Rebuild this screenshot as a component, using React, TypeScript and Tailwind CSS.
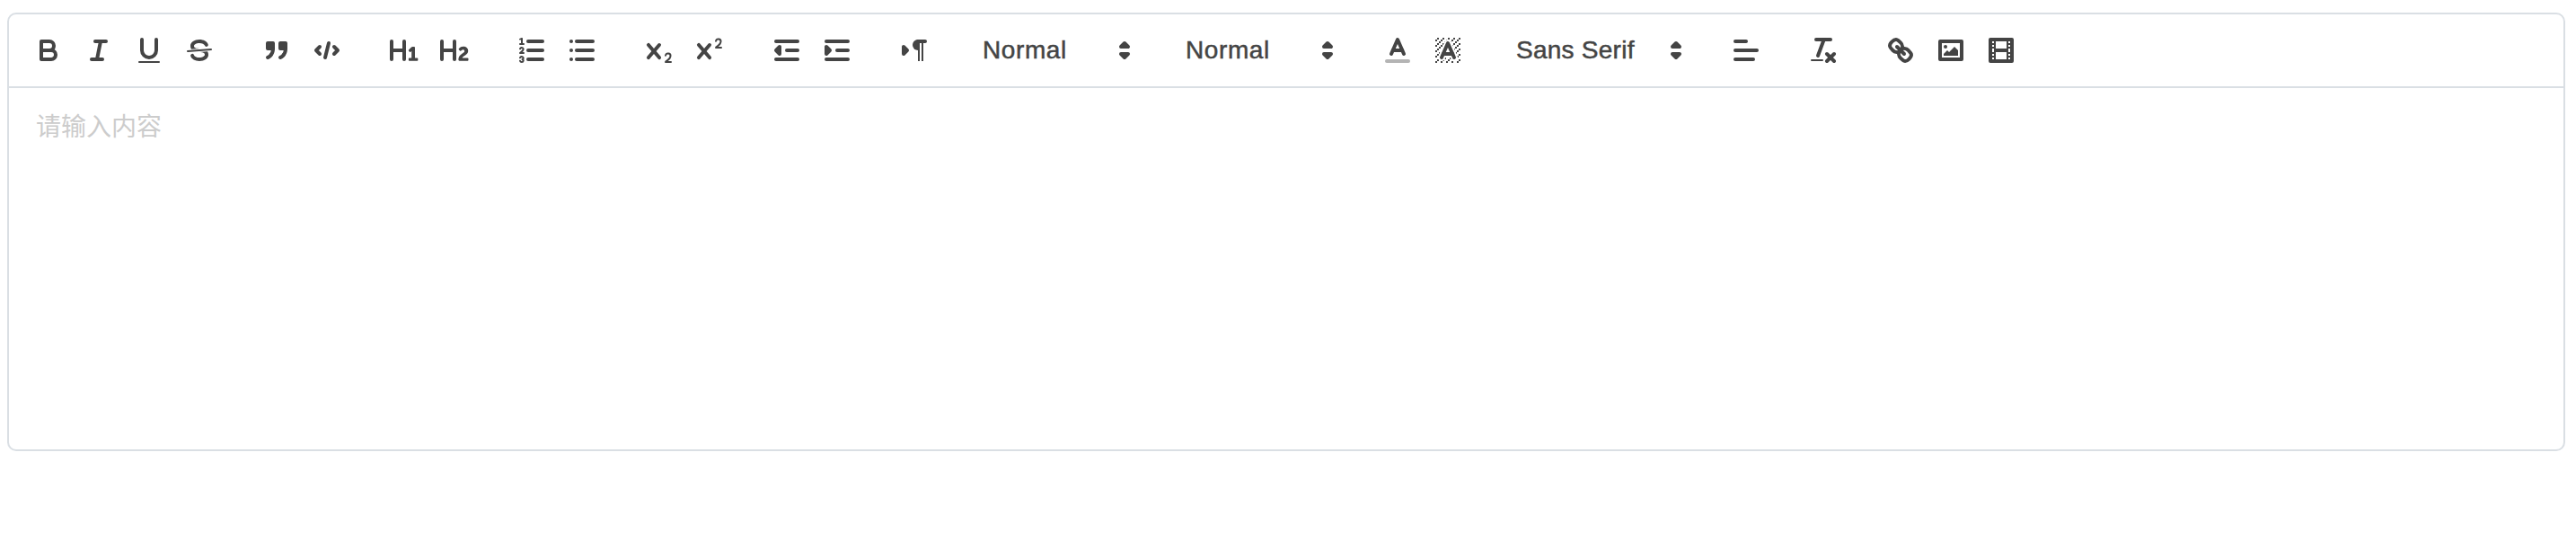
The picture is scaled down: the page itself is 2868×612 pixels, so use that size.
import type { ReactNode } from "react";

function Icon({ children }: { children: ReactNode }) {
  return (
    <svg
      viewBox="0 0 18 18"
      className="block size-9 shrink-0"
      fill="none"
      stroke="#444"
      strokeWidth={2}
      strokeLinecap="round"
      strokeLinejoin="round"
    >
      {children}
    </svg>
  );
}

function Fill({ children }: { children: ReactNode }) {
  return (
    <g fill="#444" stroke="none">
      {children}
    </g>
  );
}

function Tool({ label, children }: { label: string; children: ReactNode }) {
  return (
    <button type="button" aria-label={label} className="flex h-12 w-14 items-center justify-center">
      <Icon>{children}</Icon>
    </button>
  );
}

function Group({ children }: { children: ReactNode }) {
  return <div className="flex shrink-0">{children}</div>;
}

function Picker({ label, size }: { label: string; size: string }) {
  return (
    <button
      type="button"
      className={`flex h-12 items-center justify-between border-2 border-transparent pl-4 text-[28px] leading-[44px] text-[#444] [-webkit-text-stroke:0.5px_#444] ${size}`}
    >
      <span className="whitespace-nowrap">{label}</span>
      <Icon>
        <polygon fill="#444" points="7 11 9 13 11 11 7 11" />
        <polygon fill="#444" points="7 7 9 5 11 7 7 7" />
      </Icon>
    </button>
  );
}

const CROSS =
  "M9.65,5.241a1,1,0,0,0-1.409.108L6,7.964,3.759,5.349A1,1,0,0,0,2.192,6.59178Q2.21541,6.6213,2.241,6.649L4.684,9.5,2.241,12.35A1,1,0,0,0,3.71,13.70722q0.02557-.02768.049-0.05722L6,11.036,8.241,13.65a1,1,0,1,0,1.567-1.24277Q9.78459,12.3777,9.759,12.35L7.316,9.5,9.759,6.651A1,1,0,0,0,9.65,5.241Z";

// Unit squares of the hatch behind the background-colour icon
const HATCH: [number, number][] = [
  [4, 4], [2, 6], [3, 5], [4, 7], [2, 12], [2, 9], [2, 15], [3, 8], [12, 2], [11, 3],
  [2, 3], [6, 2], [3, 2], [5, 3], [9, 2], [15, 14], [13, 7], [15, 5], [14, 6], [15, 8],
  [14, 9], [14, 3], [15, 2], [12, 5], [13, 4], [9, 14], [8, 15], [5, 15], [11, 15],
  [14, 15], [15, 11],
];

function Toolbar() {
  return (
    <div className="flex h-20 items-center gap-[30px] px-4">
      <Group>
        <Tool label="Bold">
          <path d="M5,4H9.5A2.5,2.5,0,0,1,12,6.5v0A2.5,2.5,0,0,1,9.5,9H5A0,0,0,0,1,5,9V4A0,0,0,0,1,5,4Z" />
          <path d="M5,9h5.5A2.5,2.5,0,0,1,13,11.5v0A2.5,2.5,0,0,1,10.5,14H5a0,0,0,0,1,0,0V9A0,0,0,0,1,5,9Z" />
        </Tool>
        <Tool label="Italic">
          <line x1="7" x2="13" y1="4" y2="4" />
          <line x1="5" x2="11" y1="14" y2="14" />
          <line x1="8" x2="10" y1="14" y2="4" />
        </Tool>
        <Tool label="Underline">
          <path d="M5,3V9a4.012,4.012,0,0,0,4,4H9a4.012,4.012,0,0,0,4-4V3" />
          <Fill>
            <rect height="1" rx="0.5" width="12" x="3" y="15" />
          </Fill>
        </Tool>
        <Tool label="Strike">
          <line strokeWidth="1" x1="15.5" x2="2.5" y1="8.5" y2="9.5" />
          <Fill>
            <path d="M9.007,8C6.542,7.791,6,7.519,6,6.5,6,5.792,7.283,5,9,5c1.571,0,2.765.679,2.969,1.309a1,1,0,0,0,1.9-.617C13.356,4.106,11.354,3,9,3,6.2,3,4,4.538,4,6.5a3.2,3.2,0,0,0,.5,1.843Z" />
            <path d="M8.984,10C11.457,10.208,12,10.479,12,11.5c0,0.708-1.283,1.5-3,1.5-1.571,0-2.765-.679-2.969-1.309a1,1,0,1,0-1.9.617C4.644,13.894,6.646,15,9,15c2.8,0,5-1.538,5-3.5a3.2,3.2,0,0,0-.5-1.843Z" />
          </Fill>
        </Tool>
      </Group>

      <Group>
        <Tool label="Blockquote">
          <rect fill="#444" height="3" width="3" x="4" y="5" />
          <rect fill="#444" height="3" width="3" x="11" y="5" />
          <path fill="#444" fillRule="evenodd" d="M7,8c0,4.031-3,5-3,5" />
          <path fill="#444" fillRule="evenodd" d="M14,8c0,4.031-3,5-3,5" />
        </Tool>
        <Tool label="Code">
          <polyline points="5 7 3 9 5 11" />
          <polyline points="13 7 15 9 13 11" />
          <line x1="10" x2="8" y1="5" y2="13" />
        </Tool>
      </Group>

      <Group>
        <Tool label="Heading 1">
          <Fill>
            <path d="M10,4V14a1,1,0,0,1-2,0V10H3v4a1,1,0,0,1-2,0V4A1,1,0,0,1,3,4V8H8V4a1,1,0,0,1,2,0Zm6.06787,9.209H14.98975V7.59863a.54085.54085,0,0,0-.605-.60547h-.62744a1.01119,1.01119,0,0,0-.748.29688L11.645,8.56641a.5435.5435,0,0,0-.022.8584l.28613.30762a.53861.53861,0,0,0,.84717.0332l.09912-.08789a1.2137,1.2137,0,0,0,.2417-.35254h.02246s-.01123.30859-.01123.60547V13.209H12.041a.54085.54085,0,0,0-.605.60547v.43945a.54085.54085,0,0,0,.605.60547h4.02686a.54085.54085,0,0,0,.605-.60547v-.43945A.54085.54085,0,0,0,16.06787,13.209Z" />
          </Fill>
        </Tool>
        <Tool label="Heading 2">
          <Fill>
            <path d="M16.73975,13.81445v.43945a.54085.54085,0,0,1-.605.60547H11.855a.58392.58392,0,0,1-.64893-.60547V14.0127c0-2.90527,3.39941-3.42187,3.39941-4.55469a.77675.77675,0,0,0-.84717-.78125,1.17684,1.17684,0,0,0-.83594.38477c-.2749.26367-.561.374-.85791.13184l-.4292-.34082c-.30811-.24219-.38525-.51758-.1543-.81445a2.97155,2.97155,0,0,1,2.45361-1.17676,2.45393,2.45393,0,0,1,2.68408,2.40918c0,2.45312-3.1792,2.92676-3.27832,3.93848h2.79443A.54085.54085,0,0,1,16.73975,13.81445ZM9,3A.99974.99974,0,0,0,8,4V8H3V4A1,1,0,0,0,1,4V14a1,1,0,0,0,2,0V10H8v4a1,1,0,0,0,2,0V4A.99974.99974,0,0,0,9,3Z" />
          </Fill>
        </Tool>
      </Group>

      <Group>
        <Tool label="Ordered list">
          <line x1="7" x2="15" y1="4" y2="4" />
          <line x1="7" x2="15" y1="9" y2="9" />
          <line x1="7" x2="15" y1="14" y2="14" />
          <line strokeWidth="1" x1="2.5" x2="4.5" y1="5.5" y2="5.5" />
          <Fill>
            <path d="M3.5,6A0.5,0.5,0,0,1,3,5.5V3.085l-0.276.138A0.5,0.5,0,0,1,2.053,3c-0.124-.247-0.023-0.324.224-0.447l1-.5A0.5,0.5,0,0,1,4,2.5v3A0.5,0.5,0,0,1,3.5,6Z" />
          </Fill>
          <path strokeWidth="1" d="M4.5,10.5h-2c0-.234,1.85-1.076,1.85-2.234A0.959,0.959,0,0,0,2.5,8.156" />
          <path strokeWidth="1" d="M2.5,14.846a0.959,0.959,0,0,0,1.85-.109A0.7,0.7,0,0,0,3.75,14a0.688,0.688,0,0,0,.6-0.736,0.959,0.959,0,0,0-1.85-.109" />
        </Tool>
        <Tool label="Bullet list">
          <line x1="6" x2="15" y1="4" y2="4" />
          <line x1="6" x2="15" y1="9" y2="9" />
          <line x1="6" x2="15" y1="14" y2="14" />
          <line x1="3" x2="3" y1="4" y2="4" />
          <line x1="3" x2="3" y1="9" y2="9" />
          <line x1="3" x2="3" y1="14" y2="14" />
        </Tool>
      </Group>

      <Group>
        <Tool label="Subscript">
          <Fill>
            <path d="M15.5,15H13.861a3.858,3.858,0,0,0,1.914-2.975,1.8,1.8,0,0,0-1.6-1.751A1.921,1.921,0,0,0,12.021,11.7a0.50013,0.50013,0,1,0,.957.291h0a0.914,0.914,0,0,1,1.053-.725,0.81,0.81,0,0,1,.744.762c0,1.076-1.16971,1.86982-1.93971,2.43082A1.45639,1.45639,0,0,0,12,15.5a0.5,0.5,0,0,0,.5.5h3A0.5,0.5,0,0,0,15.5,15Z" />
            <path d={CROSS} />
          </Fill>
        </Tool>
        <Tool label="Superscript">
          <Fill>
            <path d="M15.5,7H13.861a4.015,4.015,0,0,0,1.914-2.975,1.8,1.8,0,0,0-1.6-1.751A1.922,1.922,0,0,0,12.021,3.7a0.5,0.5,0,1,0,.957.291,0.917,0.917,0,0,1,1.053-.725,0.81,0.81,0,0,1,.744.762c0,1.077-1.164,1.925-1.934,2.486A1.423,1.423,0,0,0,12,7.5a0.5,0.5,0,0,0,.5.5h3A0.5,0.5,0,0,0,15.5,7Z" />
            <path d={CROSS} />
          </Fill>
        </Tool>
      </Group>

      <Group>
        <Tool label="Outdent">
          <line x1="3" x2="15" y1="14" y2="14" />
          <line x1="3" x2="15" y1="4" y2="4" />
          <line x1="9" x2="15" y1="9" y2="9" />
          <polygon fill="#444" points="5 7 5 11 3 9 5 7" />
        </Tool>
        <Tool label="Indent">
          <line x1="3" x2="15" y1="14" y2="14" />
          <line x1="3" x2="15" y1="4" y2="4" />
          <line x1="9" x2="15" y1="9" y2="9" />
          <polygon fill="#444" points="3 7 3 11 5 9 3 7" />
        </Tool>
      </Group>

      <Group>
        <Tool label="Text direction">
          <polygon fill="#444" points="3 11 5 9 3 7 3 11" />
          <line x1="15" x2="11" y1="4" y2="4" />
          <Fill>
            <path d="M11,3a3,3,0,0,0,0,6h1V3H11Z" />
            <rect height="11" width="1" x="11" y="4" />
            <rect height="11" width="1" x="13" y="4" />
          </Fill>
        </Tool>
      </Group>

      <Group>
        <Picker label="Normal" size="w-[196px] tracking-[0.6px]" />
      </Group>
      <Group>
        <Picker label="Normal" size="w-[196px] tracking-[0.6px]" />
      </Group>

      <Group>
        <Tool label="Text color">
          <line opacity="0.4" x1="3" x2="15" y1="15" y2="15" />
          <polyline points="5.5 11 9 3 12.5 11" />
          <line x1="11.63" x2="6.38" y1="9" y2="9" />
        </Tool>
        <Tool label="Background color">
          <Fill>
            {HATCH.map(([x, y]) => (
              <rect key={`${x}-${y}`} x={x} y={y} width="1" height="1" />
            ))}
            <polygon points="6 6.868 6 6 5 6 5 7 5.942 7 6 6.868" />
            <polygon points="6.817 5 6 5 6 6 6.38 6 6.817 5" />
            <polygon points="4 11.439 4 11 3 11 3 12 3.755 12 4 11.439" />
            <polygon points="4.63 10 4 10 4 11 4.192 11 4.63 10" />
            <path d="M10.832,4.2L11,4.582V4H10.708A1.948,1.948,0,0,1,10.832,4.2Z" />
            <path d="M7,4.582L7.168,4.2A1.929,1.929,0,0,1,7.292,4H7V4.582Z" />
            <path d="M8,13H7.683l-0.351.8a1.933,1.933,0,0,1-.124.2H8V13Z" />
            <path d="M9,3H8V3.282A1.985,1.985,0,0,1,9,3Z" />
            <polygon points="13.447 10.174 13.469 10.225 13.472 10.232 13.808 11 14 11 14 10 13.37 10 13.447 10.174" />
            <path d="M3.775,14H3v1H4V14.314A1.97,1.97,0,0,1,3.775,14Z" />
            <polygon points="12 6.868 12 6 11.62 6 12 6.868" />
            <polygon points="12.933 9 13 9 13 8 12.495 8 12.933 9" />
            <path d="M6,14.926V15H7V14.316A1.993,1.993,0,0,1,6,14.926Z" />
            <path d="M10.668,13.8L10.317,13H10v1h0.792A1.947,1.947,0,0,1,10.668,13.8Z" />
            <path d="M14.332,12.2a1.99,1.99,0,0,1,.166.8H15V12H14.245Z" />
          </Fill>
          <polyline points="5.5 13 9 5 12.5 13" />
          <line x1="11.63" x2="6.38" y1="11" y2="11" />
        </Tool>
      </Group>

      <Group>
        <Picker label="Sans Serif" size="w-[216px] tracking-[0.25px]" />
      </Group>

      <Group>
        <Tool label="Align">
          <line x1="3" x2="15" y1="9" y2="9" />
          <line x1="3" x2="13" y1="14" y2="14" />
          <line x1="3" x2="9" y1="4" y2="4" />
        </Tool>
      </Group>

      <Group>
        <Tool label="Clear formatting">
          <line x1="5" x2="13" y1="3" y2="3" />
          <line x1="6" x2="9.35" y1="12" y2="3" />
          <line x1="11" x2="15" y1="11" y2="15" />
          <line x1="15" x2="11" y1="11" y2="15" />
          <Fill>
            <rect height="1" rx="0.5" width="7" x="2" y="14" />
          </Fill>
        </Tool>
      </Group>

      <Group>
        <Tool label="Link">
          <line x1="7" x2="11" y1="7" y2="11" />
          <path d="M8.9,4.577a3.476,3.476,0,0,1,.36,4.679A3.476,3.476,0,0,1,4.577,8.9C3.185,7.5,2.035,6.4,4.217,4.217S7.5,3.185,8.9,4.577Z" />
          <path d="M13.423,9.1a3.476,3.476,0,0,0-4.679-.36,3.476,3.476,0,0,0,.36,4.679c1.392,1.392,2.5,2.542,4.679.36S14.815,10.5,13.423,9.1Z" />
        </Tool>
        <Tool label="Image">
          <rect height="10" width="12" x="3" y="4" />
          <Fill>
            <circle cx="6" cy="7" r="1" />
            <polyline points="5 12 5 11 7 9 8 10 11 7 13 9 13 12 5 12" />
          </Fill>
        </Tool>
        <Tool label="Video">
          <rect height="12" width="12" x="3" y="3" />
          <Fill>
            <rect height="12" width="1" x="5" y="3" />
            <rect height="12" width="1" x="12" y="3" />
            <rect height="2" width="8" x="5" y="8" />
            {[5, 7, 10, 12].map((y) => (
              <g key={y}>
                <rect height="1" width="3" x="3" y={y} />
                <rect height="1" width="3" x="12" y={y} />
              </g>
            ))}
          </Fill>
        </Tool>
      </Group>
    </div>
  );
}

export default function App() {
  return (
    <div className="h-[612px] w-full bg-white pt-[14px] pr-3 pl-2 font-['Liberation_Sans','Noto_Sans_CJK_SC',sans-serif]">
      <div className="flex h-[488px] flex-col rounded-[10px] border-2 border-[#dadfe4]">
        <Toolbar />
        <div className="flex-1 border-t-2 border-[#dadfe4] px-[30px] py-6 text-[28px] leading-10 text-[#ccc]">
          请输入内容
        </div>
      </div>
    </div>
  );
}
